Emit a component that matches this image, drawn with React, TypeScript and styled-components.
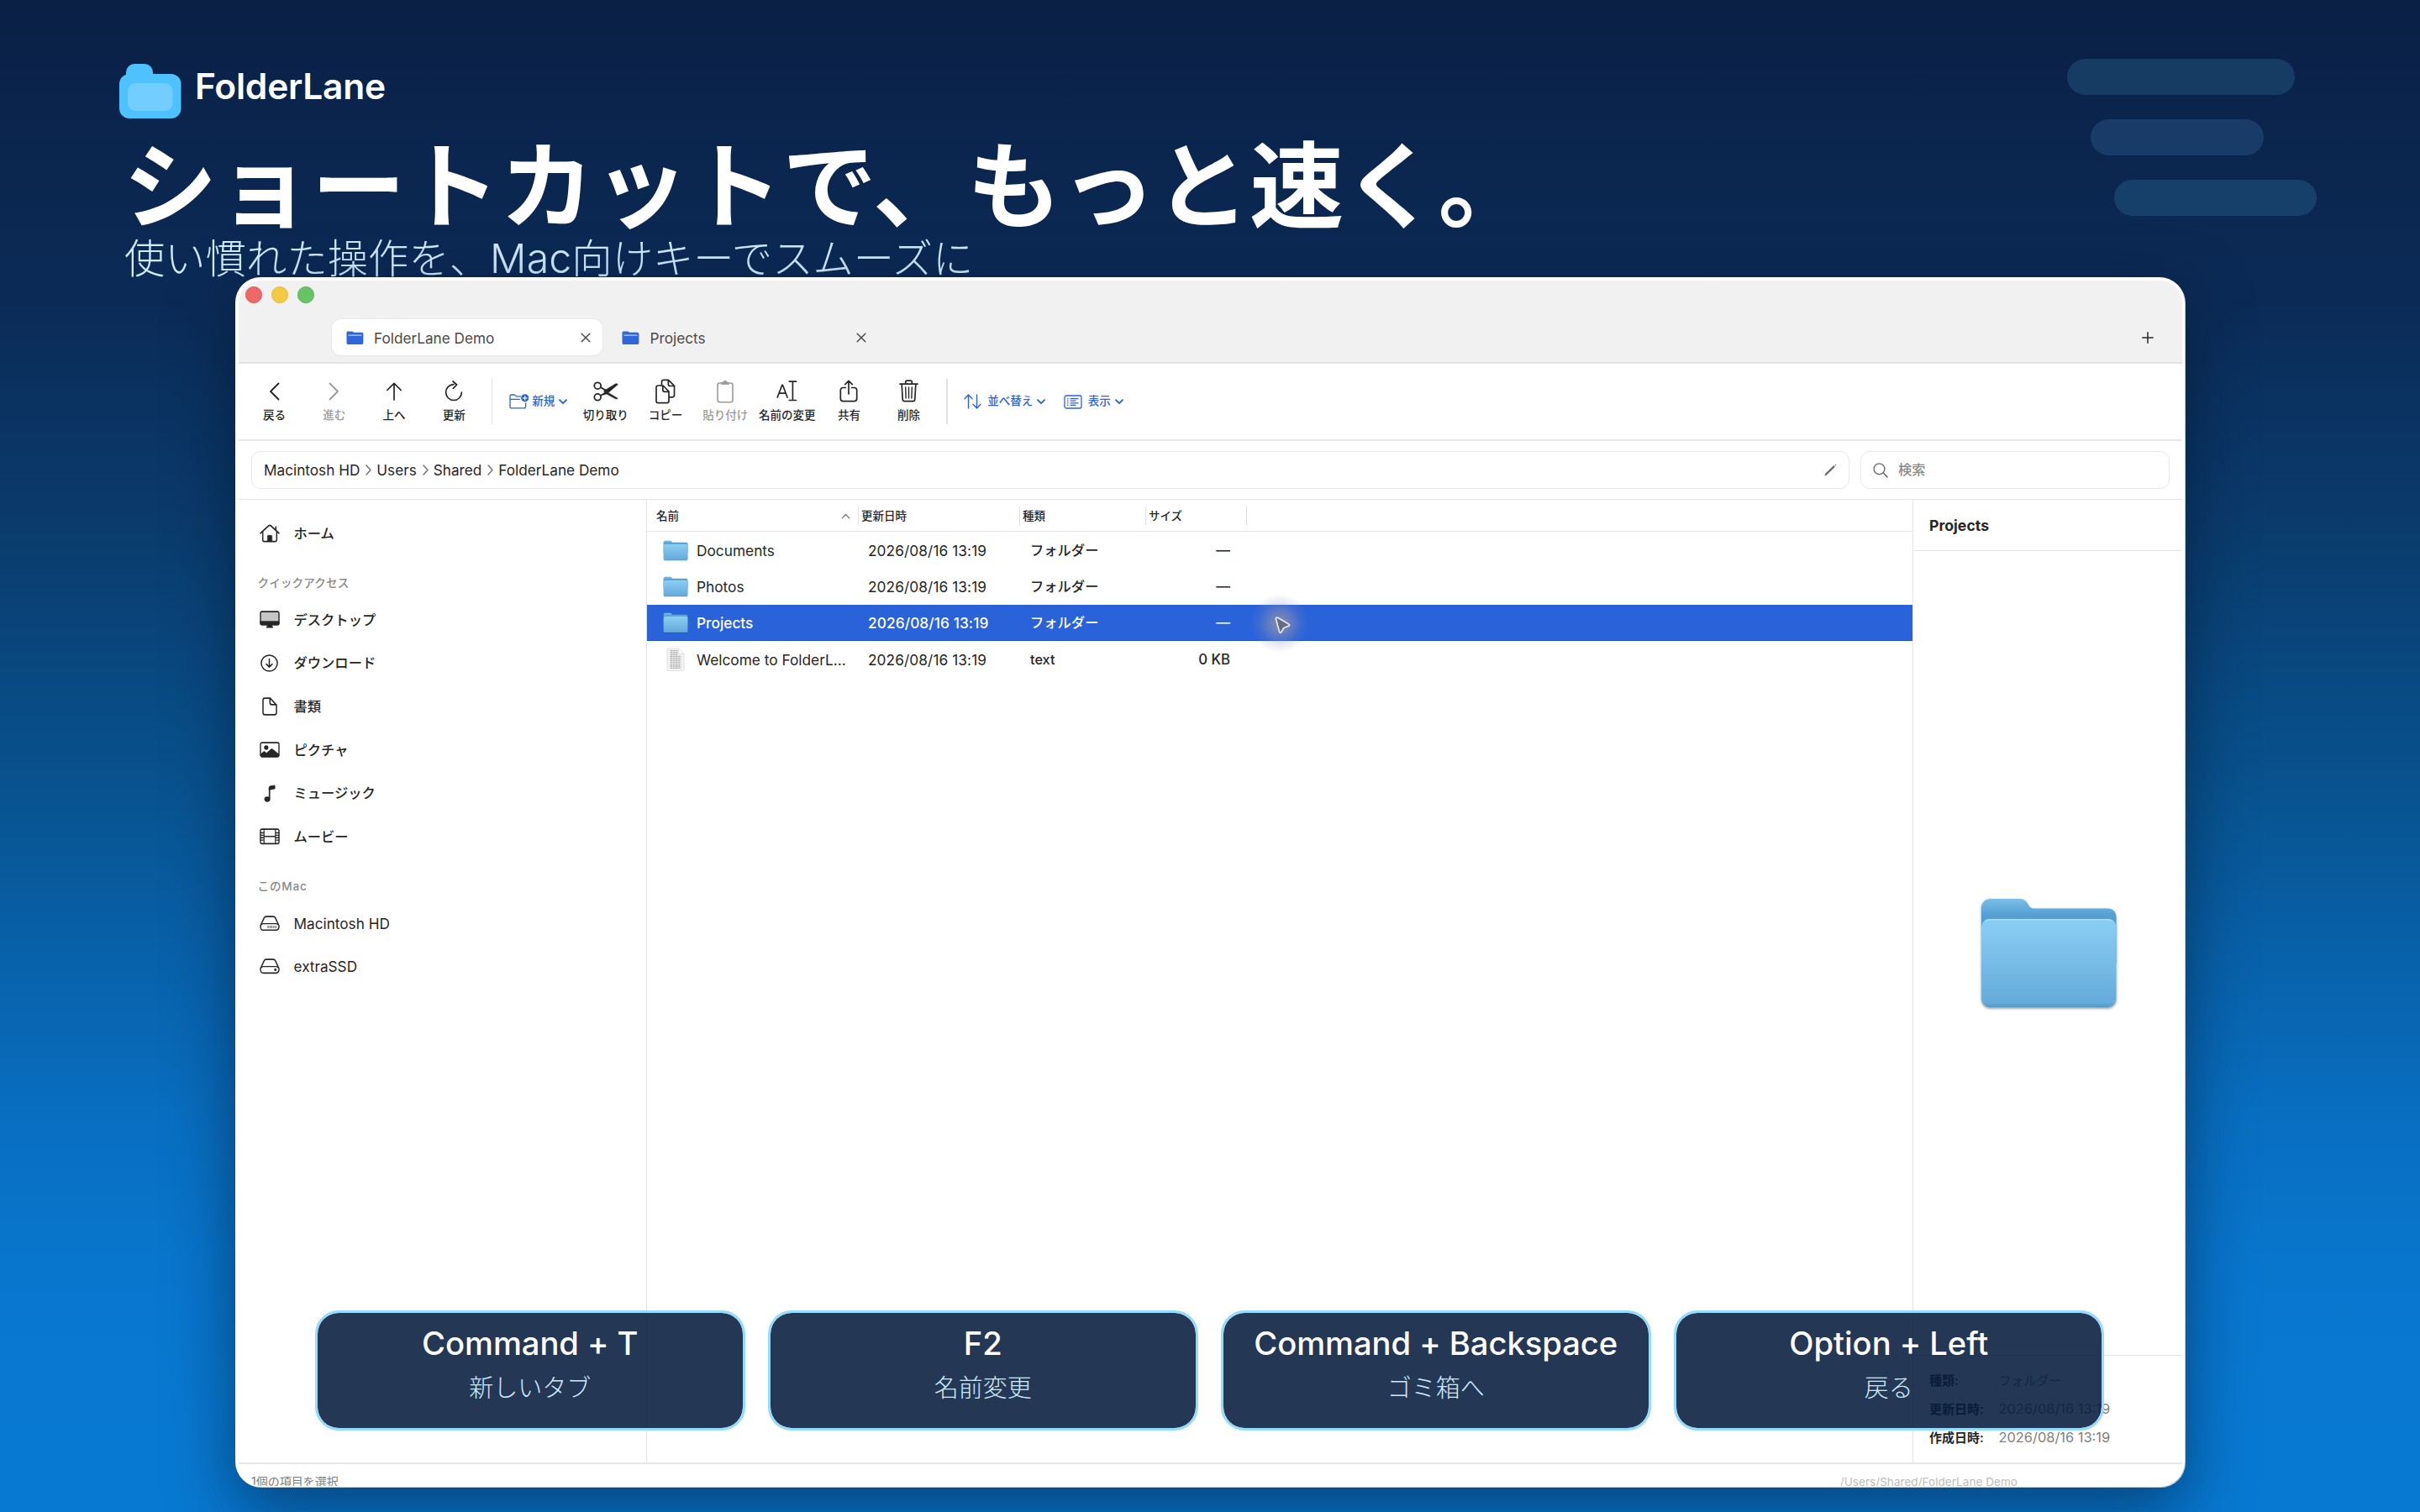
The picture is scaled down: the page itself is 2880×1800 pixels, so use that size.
import React from "react";
import styled, { createGlobalStyle, css } from "styled-components";

const INK = "#262626";
const BLUE = "#2a62d9";
const LINE = "#e4e4e4";

const GlobalStyle = createGlobalStyle`
  *, *::before, *::after { box-sizing: border-box; }
  html, body { margin: 0; padding: 0; background: #0a2045; }
  body { font-family: Inter, "Noto Sans CJK JP", sans-serif; color: ${INK}; line-height: 1; }
  h1, p { margin: 0; font-weight: inherit; }
  svg { display: block; flex: none; }
`;

const Stage = styled.div`
  position: relative;
  width: 2880px;
  height: 1800px;
  overflow: hidden;
  background: linear-gradient(
    180deg,
    #0a2045 0,
    #0b2b57 360px,
    #0a3c6e 640px,
    #08528e 930px,
    #0862ab 1150px,
    #086fc2 1340px,
    #0876cd 1500px,
    #0879d2 1700px
  );
`;

const Header = styled.header`
  height: 330px;
  padding: 76px 0 0 142px;
  display: flex;
  flex-direction: column;
  align-items: flex-start;
`;

const Brand = styled.div`
  display: flex;
  gap: 16px;
  height: 66px;
`;

const BrandName = styled.div`
  margin-top: 6px;
  font-size: 42.5px;
  line-height: 42px;
  font-weight: 600;
  letter-spacing: -0.25px;
  color: #fff;
  white-space: nowrap;
`;

const Headline = styled.h1`
  margin-left: 4.5px;
  margin-top: 24px;
  height: 112px;
  line-height: 112px;
  font-size: 112px;
  font-weight: 700;
  letter-spacing: 0.1px;
  color: #fff;
  white-space: nowrap;
`;

const Tagline = styled.p`
  margin-left: 6px;
  margin-top: 6px;
  line-height: 48px;
  font-size: 48.3px;
  font-weight: 300;
  letter-spacing: 0.05px;
  color: #cfebff;
  white-space: nowrap;
`;

const Lanes = styled.div`
  position: absolute;
  left: 2460px;
  top: 70px;
  display: flex;
  flex-direction: column;
  gap: 29px;
`;

const LaneBar = styled.div<{ $indent: number; $width: number; $color: string }>`
  height: 43px;
  border-radius: 22px;
  margin-left: ${(p) => p.$indent}px;
  width: ${(p) => p.$width}px;
  background: ${(p) => p.$color};
`;

const Window = styled.main`
  position: relative;
  margin-left: 280px;
  width: 2320px;
  height: 1440px;
  padding: 4px 3px 1px 4px;
  border-radius: 30px;
  background: #fff;
  box-shadow: 1px 1px 0 #bccbd8, 0 28px 78px rgba(3, 14, 34, 0.5);
`;

const WindowBody = styled.div`
  display: flex;
  flex-direction: column;
  height: 100%;
  overflow: hidden;
  border-radius: 27px;
`;

const Chrome = styled.div`
  height: 99px;
  flex: none;
  background: #f1f1f1;
  border-bottom: 2px solid #e3e3e3;
`;

const Lights = styled.div`
  display: flex;
  gap: 11.5px;
  padding: 7px 0 0 8px;
  height: 46px;
`;

const Light = styled.span<{ $fill: string; $edge: string }>`
  width: 19.5px;
  height: 19.5px;
  border-radius: 50%;
  background: ${(p) => p.$fill};
  border: 1px solid ${(p) => p.$edge};
`;

const TabStrip = styled.div`
  display: flex;
  align-items: center;
  padding: 0 34.5px 0 110.5px;
`;

const Tab = styled.div<{ $active?: boolean }>`
  display: flex;
  align-items: center;
  width: 322px;
  height: 43px;
  margin-right: 6.5px;
  padding: 1px 14px 0 17px;
  border-radius: 11px;
  font-size: 17.2px;
  font-weight: 420;
  color: #4a4a4a;
  ${(p) =>
    p.$active &&
    css`
      background: #fff;
      box-shadow: 0 0 0 1px #e8e8e8, 0 1px 2px rgba(0, 0, 0, 0.06);
    `}
`;

const TabLabel = styled.span`
  flex: 1;
  margin-left: 12.5px;
  padding-top: 1px;
  white-space: nowrap;
`;

const Spacer = styled.div`
  flex: 1;
`;

const Toolbar = styled.div`
  display: flex;
  align-items: center;
  flex: none;
  height: 92px;
  padding-left: 7px;
  border-bottom: 2px solid #e8e8e8;
`;

const ToolItem = styled.div<{ $width?: number; $dim?: boolean }>`
  width: ${(p) => p.$width ?? 71.2}px;
  display: flex;
  flex-direction: column;
  align-items: center;
  gap: 6px;
  padding-bottom: 3px;
  color: ${(p) => (p.$dim ? "#9a9a9a" : INK)};
`;

const ToolIcon = styled.div`
  height: 28px;
  display: flex;
  align-items: center;
`;

const ToolLabel = styled.span`
  font-size: 13.5px;
  line-height: 16px;
  font-weight: 500;
  white-space: nowrap;
`;

const Divider = styled.div<{ $before: number; $after: number }>`
  width: 1.5px;
  height: 54px;
  margin: 0 ${(p) => p.$after}px 0 ${(p) => p.$before}px;
  background: #e2e2e2;
`;

const MenuItem = styled.div<{ $after?: number; $gap?: number }>`
  display: flex;
  align-items: center;
  margin-right: ${(p) => p.$after ?? 0}px;
  color: ${BLUE};
  font-size: 13.5px;
  font-weight: 500;
  white-space: nowrap;

  span {
    margin: 0 5px 0 ${(p) => p.$gap ?? 7}px;
  }
`;

const AddressRow = styled.div`
  display: flex;
  flex: none;
  gap: 13px;
  height: 70px;
  padding: 12px 15px 0 15px;
  border-bottom: 1.5px solid ${LINE};
`;

const Field = styled.div<{ $width?: number }>`
  display: flex;
  align-items: center;
  height: 45px;
  border: 1.5px solid #e8e8e8;
  border-radius: 11px;
  padding: 0 14px;
  color: #6e6e6e;
  ${(p) => (p.$width ? `width: ${p.$width}px;` : "flex: 1;")}
`;

const Crumb = styled.span`
  font-size: 17.2px;
  font-weight: 420;
  color: ${INK};
  white-space: nowrap;
`;

const CrumbMark = styled.span`
  width: 20px;
  display: flex;
  justify-content: center;
  padding-left: 1px;
`;

const Placeholder = styled.span`
  margin-left: 12px;
  font-size: 16.3px;
  font-weight: 500;
  color: #8a8a8a;
`;

const Columns = styled.div`
  display: flex;
  flex: 1;
  min-height: 0;
`;

const Sidebar = styled.nav`
  width: 486px;
  padding-top: 14px;
  border-right: 1.5px solid ${LINE};
`;

const Place = styled.div<{ $latin?: boolean }>`
  display: flex;
  align-items: center;
  gap: 17px;
  height: 51.6px;
  padding-left: 24.5px;
  font-size: ${(p) => (p.$latin ? 17.2 : 16.3)}px;
  font-weight: ${(p) => (p.$latin ? 430 : 500)};
  white-space: nowrap;
`;

const SectionLabel = styled.div<{ $spacing?: number }>`
  height: 51.6px;
  padding: 25.5px 0 0 22.5px;
  font-size: 13.6px;
  line-height: 16px;
  font-weight: 500;
  letter-spacing: ${(p) => p.$spacing ?? 0.1}px;
  color: #8a8a8a;
`;

const FileList = styled.section`
  position: relative;
  width: 1506px;
`;

const listGrid = css`
  display: grid;
  grid-template-columns: 252px 192px 150px 120px;
  align-items: center;
`;

const ListHeader = styled.div`
  ${listGrid}
  height: 38px;
  border-bottom: 1.5px solid ${LINE};
  font-size: 13.5px;
  font-weight: 500;
`;

const HeadCell = styled.div<{ $first?: boolean }>`
  display: flex;
  align-items: center;
  justify-content: space-between;
  height: 22px;
  padding: 2px 9.5px 0 ${(p) => (p.$first ? 11 : 3)}px;
  border-right: 1.5px solid #e0e0e0;

  svg {
    color: #6a6a6a;
  }
`;

const FileRow = styled.div<{ $selected?: boolean }>`
  ${listGrid}
  height: 43.4px;
  padding-top: 1px;
  font-size: 17.3px;
  font-weight: 420;
  white-space: nowrap;
  ${(p) =>
    p.$selected &&
    css`
      background: ${BLUE};
      border-bottom: 1px solid #1c50cc;
      color: #fff;
      font-weight: 450;
    `}
`;

const NameCell = styled.div`
  display: flex;
  align-items: center;
  padding-left: 19.5px;
  gap: 11.5px;
`;

const IconSlot = styled.div`
  width: 28px;
  display: flex;
  justify-content: center;
`;

const TextCell = styled.div`
  padding-left: 11px;
  letter-spacing: 0.08px;
`;

const KindCell = styled.div`
  padding-left: 12px;
  font-size: 16.3px;
  font-weight: 450;
`;

const SizeCell = styled.div`
  padding-right: 20px;
  text-align: right;
  font-size: 16.8px;
  font-weight: 450;
`;

const Pointer = styled.div`
  position: absolute;
  left: 718px;
  top: 112px;
  width: 70px;
  height: 70px;
  display: flex;
  align-items: center;
  justify-content: center;
  padding: 6px 0 0 5px;
  background: radial-gradient(
    circle closest-side,
    rgba(150, 150, 165, 0.85) 0,
    rgba(140, 145, 175, 0.6) 35%,
    rgba(130, 140, 190, 0.2) 70%,
    rgba(130, 140, 190, 0) 100%
  );
`;

const Preview = styled.aside`
  flex: 1;
  display: flex;
  flex-direction: column;
  border-left: 1.5px solid ${LINE};
`;

const PreviewTitle = styled.div`
  height: 61px;
  padding: 0 0 0 19px;
  line-height: 61px;
  border-bottom: 1.5px solid ${LINE};
  font-size: 17.7px;
  font-weight: 700;
`;

const PreviewArt = styled.div`
  flex: 1;
  display: flex;
  align-items: center;
  justify-content: center;
  padding-left: 2px;
`;

const Facts = styled.dl`
  margin: 0;
  height: 128px;
  padding: 12px 0 0 19px;
  border-top: 1.5px solid ${LINE};
`;

const Fact = styled.div`
  display: flex;
  align-items: center;
  height: 34px;
  font-size: 15px;

  dt {
    width: 82.5px;
    font-weight: 600;
  }

  dd {
    margin: 0;
    color: #808080;
  }
`;

const Stamp = styled.span`
  font-size: 16.4px;
`;

const StatusBar = styled.footer`
  display: flex;
  flex: none;
  justify-content: space-between;
  height: 28px;
  padding: 12.5px 196px 0 15px;
  border-top: 2px solid #e6e6e6;
  font-size: 14px;
  line-height: 16px;
  color: #7d7d7d;
  white-space: nowrap;
`;

const StatusPath = styled.span`
  font-size: 13.6px;
  color: #bcbcbc;
`;

const Shortcuts = styled.div`
  position: absolute;
  left: 95px;
  top: 1230px;
  display: flex;
  gap: 27.5px;
`;

const Shortcut = styled.div`
  display: flex;
  flex-direction: column;
  align-items: center;
  width: 511.5px;
  height: 143px;
  padding-top: 16px;
  border: 3px solid #93dcfd;
  border-radius: 28px;
  background: rgba(6, 27, 60, 0.88);
  background-clip: padding-box;
`;

const Keys = styled.div`
  font-size: 38.2px;
  line-height: 40px;
  font-weight: 550;
  letter-spacing: -0.05px;
  color: #fff;
  white-space: nowrap;
`;

const KeyAction = styled.div`
  margin-top: 19px;
  font-size: 29px;
  line-height: 30px;
  font-weight: 300;
  color: #cdebff;
`;

type IconProps = { w: number; h: number; vh?: number; sw?: number; children: React.ReactNode };

const Icon = ({ w, h, vh, sw = 1.7, children }: IconProps) => (
  <svg
    width={w}
    height={h}
    viewBox={`0 0 ${w} ${vh ?? h}`}
    preserveAspectRatio="none"
    fill="none"
    stroke="currentColor"
    strokeWidth={sw}
    strokeLinecap="round"
    strokeLinejoin="round"
  >
    {children}
  </svg>
);

const Logo = () => (
  <svg width="74" height="66" viewBox="0 0 74 66">
    <rect x="8" y="0" width="32" height="34" rx="10" fill="#4dc2ff" />
    <rect x="0" y="12" width="73.5" height="53" rx="12" fill="#4dc2ff" />
    <rect x="10" y="23" width="53.5" height="33" rx="9" fill="#73ceff" />
  </svg>
);

const TabFolder = () => (
  <svg width="21" height="17" viewBox="0 0 21 17">
    <path
      d="M2.2 0.5h4.6c.6 0 1 .2 1.5.6l.8.6h9.3c1.3 0 2 .7 2 2v10.2c0 1.3-.8 2.1-2.1 2.1H2.6C1.3 16 .5 15.2.5 13.9V2.3C.5 1.1 1.1.5 2.2.5z"
      fill="#2f66d8"
    />
    <path d="M2.6 5.1h15.8" stroke="#dfe9ff" strokeWidth="1" />
  </svg>
);

const CloseIcon = () => (
  <Icon w={12} h={12} sw={1.5}>
    <path d="M1.2 1.2l9.6 9.6M10.8 1.2L1.2 10.8" />
  </Icon>
);

const ChevronDown = () => (
  <Icon w={10} h={7} sw={1.9}>
    <path d="M1 1.2l4 4 4-4" />
  </Icon>
);

const CrumbChevron = () => (
  <Icon w={7} h={13} sw={1.4}>
    <path d="M1 1l5 5.5-5 5.5" />
  </Icon>
);

const FolderArt = ({ w, h, id }: { w: number; h: number; id: string }) => (
  <svg width={w} height={h} viewBox="0 0 168 138" preserveAspectRatio="none">
    <defs>
      <linearGradient id={`${id}-back`} x1="0" y1="0" x2="0" y2="1">
        <stop offset="0" stopColor="#7bbfe9" />
        <stop offset="0.25" stopColor="#559fd3" />
        <stop offset="1" stopColor="#4b94ca" />
      </linearGradient>
      <linearGradient id={`${id}-front`} x1="0" y1="0" x2="0" y2="1">
        <stop offset="0" stopColor="#8bcef4" />
        <stop offset="0.95" stopColor="#65abdb" />
        <stop offset="1" stopColor="#5397c6" />
      </linearGradient>
      <filter id={`${id}-shadow`} x="-10%" y="-10%" width="120%" height="125%">
        <feDropShadow dx="0" dy="1.5" stdDeviation="1.5" floodColor="#000" floodOpacity="0.45" />
      </filter>
    </defs>
    <g filter={`url(#${id}-shadow)`}>
      <path
        d="M4 15c0-6.5 4.5-11 11-11h34.5c4 0 7 1.7 9.2 5l1.8 2.9c1.7 2.7 3.5 3.6 7 3.6H154c6.5 0 10.5 4 10.5 10.5V80H4z"
        fill={`url(#${id}-back)`}
      />
      <path
        d="M4 38c0-6 4.5-10 10.5-10H154c6 0 10.5 4 10.5 10v84.5c0 6-4.5 10.5-10.5 10.5H14.5C8.5 133 4 128.5 4 122.5z"
        fill={`url(#${id}-front)`}
      />
      <path d="M8 30.5c2-1.3 4-1.7 6.5-1.7H154c2.5 0 4.5.4 6.5 1.7" fill="none" stroke="#a6defc" strokeWidth="1.4" />
    </g>
  </svg>
);

const TextFileArt = () => (
  <svg width="24" height="29" viewBox="0 0 24 29">
    <path d="M3 1h12.5L22 7.5V26c0 1-.6 1.6-1.6 1.6H3.6C2.6 27.6 2 27 2 26V2c0-.6.4-1 1-1z" fill="#f3f3f3" stroke="#dcdcdc" strokeWidth="0.9" />
    <path d="M15.5 1v5c0 1 .5 1.5 1.5 1.5h5z" fill="#fff" stroke="#dcdcdc" strokeWidth="0.7" />
    <g stroke="#b0b0b0" strokeWidth="1.3" strokeDasharray="3 .6 2 .5">
      <path d="M5.5 3.6h9M5.5 5.9h9M5.5 8.2h9M5.5 10.5h13M5.5 12.8h13M5.5 15.1h13M5.5 17.4h13M5.5 19.7h13M5.5 22h13M5.5 24.3h13" />
    </g>
  </svg>
);

const NewFolderIcon = () => (
  <Icon w={23.5} h={18} sw={1.3}>
    <path d="M13.5 2.9H8.5L7 1.4c-.3-.3-.6-.4-1-.4H2.6C1.6 1 1 1.6 1 2.6v12.3c0 1.2.8 2 2 2h14.6c1.2 0 2-.8 2-2V11M1 6.3h11.5" />
    <circle cx="18.7" cy="4.8" r="4.6" fill="currentColor" stroke="none" />
    <path d="M18.7 2.5v4.6M16.4 4.8H21" stroke="#fff" strokeWidth="1.2" />
  </Icon>
);

const SortIcon = () => (
  <Icon w={21} h={18} sw={1.4}>
    <path d="M5.5 17V1.2M1 5.7l4.5-4.6L10 5.7M15.5 1v15.8M11 12.3l4.5 4.6 4.5-4.6" />
  </Icon>
);

const ViewIcon = () => (
  <Icon w={22} h={17} sw={1.3}>
    <rect x="1" y="1" width="20" height="15" rx="2" />
    <path d="M8 4.7h9M8 7.2h6M8 9.8h9M8 12.3h6" strokeWidth="1.2" />
    <path d="M4.7 4.7h.3M4.7 7.2h.3M4.7 9.8h.3M4.7 12.3h.3" strokeWidth="1.4" />
  </Icon>
);

const navTools = [
  {
    label: "戻る",
    icon: (
      <Icon w={13} h={22} sw={1.9}>
        <path d="M11.5 1.5L2 11l9.5 9.5" />
      </Icon>
    ),
  },
  {
    label: "進む",
    dim: true,
    icon: (
      <Icon w={13} h={22} sw={1.8}>
        <path d="M1.5 1.5L11 11l-9.5 9.5" />
      </Icon>
    ),
  },
  {
    label: "上へ",
    icon: (
      <Icon w={20} h={22}>
        <path d="M10 21V1.3M1.8 9.5L10 1.3l8.2 8.2" />
      </Icon>
    ),
  },
  {
    label: "更新",
    icon: (
      <Icon w={22} h={26}>
        <path d="M11 4.7a9.4 9.4 0 1 0 9.4 9.4M10 1l4.6 4-4.3 4.4" />
      </Icon>
    ),
  },
];

const editTools = [
  {
    label: "切り取り",
    icon: (
      <Icon w={30} h={24} sw={1.8}>
        <circle cx="5.2" cy="5.2" r="3.9" />
        <circle cx="5.2" cy="18.8" r="3.9" />
        <path d="M8.7 7l6 3.6M8.7 17l6-3.6" />
        <path d="M12.5 11.2L26 3.3c1.3-.7 2.6-.6 3.3.4L16.5 14.8l-4.5 1.4 1.5-4zM17.5 13.2l11.8 7c-.8 1-2.2 1-3.4.4L15.5 14.8z" fill="currentColor" strokeWidth="0.5" />
      </Icon>
    ),
  },
  {
    label: "コピー",
    icon: (
      <Icon w={26} h={30}>
        <path d="M8.5 7.5V3.5c0-1.3.9-2.2 2.2-2.2h5.8l7 7v11.3c0 1.3-.9 2.2-2.2 2.2h-3.5M16.3 1.5v4.7c0 1.5.8 2.3 2.3 2.3h4.7" />
        <path d="M2 10.2C2 8.8 2.9 8 4.2 8H10l7 7v11.5c0 1.3-.9 2.2-2.2 2.2H4.2c-1.3 0-2.2-.9-2.2-2.2zM9.8 8.2V13c0 1.5.8 2.3 2.3 2.3h4.7" />
      </Icon>
    ),
  },
  {
    label: "貼り付け",
    dim: true,
    icon: (
      <Icon w={20} h={28} sw={1.6}>
        <path d="M5.5 4H3.5C2 4 1 5 1 6.5v17.7c0 1.5 1 2.5 2.5 2.5h13c1.5 0 2.5-1 2.5-2.5V6.5C19 5 18 4 16.5 4h-2" />
        <path d="M6.5 3.3h1.2c.2-1.2 1.1-2 2.3-2s2.1.8 2.3 2h1.2c.6 0 1 .4 1 1v1.2H5.5V4.3c0-.6.4-1 1-1z" fill="currentColor" strokeWidth="0.8" />
      </Icon>
    ),
  },
  {
    label: "名前の変更",
    width: 76,
    icon: (
      <Icon w={25} h={25} sw={1.7}>
        <path d="M1.2 20L6.8 5.3h.6L13 20M3.2 15.2H11" />
        <path d="M15.3 1.2h8.2M15.3 23.5h8.2M19.4 1.2v22.3" />
      </Icon>
    ),
  },
  {
    label: "共有",
    icon: (
      <Icon w={22} h={27}>
        <path d="M7.3 9.5H4.5C2.5 9.5 1.3 10.7 1.3 12.6v9.8c0 2 1.2 3.2 3.2 3.2h13c2 0 3.2-1.2 3.2-3.2v-9.8c0-1.9-1.2-3.1-3.2-3.1h-2.8M11 17V1.5M6.7 5.7L11 1.4l4.3 4.3" />
      </Icon>
    ),
  },
  {
    label: "削除",
    icon: (
      <Icon w={23} h={27}>
        <path d="M1 5.2h21M7.7 5V3c0-1.2.7-1.9 1.9-1.9h3.8c1.2 0 1.9.7 1.9 1.9v2M3.2 5.5l1 18c.1 1.4 1 2.2 2.4 2.2h9.8c1.4 0 2.3-.8 2.4-2.2l1-18" />
        <path d="M7.7 9l.4 13M11.5 9v13M15.3 9l-.4 13" strokeWidth="1.4" />
      </Icon>
    ),
  },
];

const HomeIcon = () => (
  <Icon w={24} h={22} vh={19} sw={1.5}>
    <path d="M1 9.3L10.9 1.5c.7-.5 1.5-.5 2.2 0L23 9.3M3.7 8v8.5c0 .9.5 1.4 1.4 1.4h13.8c.9 0 1.4-.5 1.4-1.4V8M19.3 6V2.8" />
    <path d="M9.3 17.5v-5.2c0-.6.3-.9.9-.9h3.6c.6 0 .9.3.9.9v5.2z" fill="currentColor" strokeWidth="0.5" />
  </Icon>
);

const DesktopIcon = () => (
  <Icon w={24} h={21} vh={18} sw={1.4}>
    <rect x="1" y="1" width="22" height="13.3" rx="1.5" fill="#c6c6c6" />
    <path d="M1 11h22v2.3c0 .7-.4 1.2-1.2 1.2H2.2c-.8 0-1.2-.5-1.2-1.2zM9.5 14.5h5v2h-5z" fill="currentColor" strokeWidth="0.8" />
    <path d="M8.5 16.8h7" />
  </Icon>
);

const DownloadIcon = () => (
  <Icon w={21} h={21} sw={1.5}>
    <circle cx="10.5" cy="10.5" r="9.6" />
    <path d="M10.5 5.5v9.5M7 11.6l3.5 3.5 3.5-3.5" />
  </Icon>
);

const DocIcon = () => (
  <Icon w={18} h={22} vh={19} sw={1.5}>
    <path d="M1 3.2C1 1.8 1.9 1 3.2 1H9.5l7.5 7v7.8c0 1.4-.9 2.2-2.2 2.2H3.2C1.9 18 1 17.2 1 15.8zM9.3 1.2v4.5c0 1.4.7 2 2.2 2H17" />
  </Icon>
);

const PictureIcon = () => (
  <Icon w={24} h={19} vh={17} sw={1.4}>
    <rect x="1" y="1" width="22" height="15" rx="1.8" />
    <ellipse cx="7.8" cy="6.3" rx="1.9" ry="1.7" fill="currentColor" />
    <path d="M1.2 13.2l3.6-2.6c.5-.3 1-.3 1.5.1l1.9 1.4 5.3-4.2c.6-.5 1.2-.5 1.8 0l7.5 5.2V15c0 .6-.4 1-1 1H2.2c-.6 0-1-.4-1-1z" fill="currentColor" strokeWidth="0.5" />
  </Icon>
);

const MusicIcon = () => (
  <Icon w={14} h={21} vh={18} sw={1.2}>
    <path d="M6.7 3.2v11.3" strokeWidth="1.7" />
    <path d="M6.3 3.2c0-1 .4-1.5 1.3-1.7L12.5.8c.4-.1.7.2.7.6v2.8L6.5 5.5z" fill="currentColor" strokeWidth="0.6" />
    <ellipse cx="4" cy="15" rx="2.9" ry="2.1" fill="currentColor" />
  </Icon>
);

const MovieIcon = () => (
  <Icon w={24} h={19.5} vh={17} sw={1.4}>
    <rect x="1" y="1" width="22" height="15" rx="1.5" />
    <path d="M5.2 1v15M18.8 1v15M5.2 8.5h13.6M1 4.8h4M1 7.3h4M1 9.8h4M1 12.3h4M19 4.8h4M19 7.3h4M19 9.8h4M19 12.3h4" strokeWidth="1.2" />
  </Icon>
);

const DiskIcon = ({ external }: { external?: boolean }) => (
  <Icon w={24} h={18.5} vh={16} sw={1.4}>
    <path d="M1 11.3c0-.7.1-1.2.4-1.7l3.8-7C5.8 1.5 6.6 1 7.8 1h8.4c1.2 0 2 .5 2.6 1.6l3.8 7c.3.5.4 1 .4 1.7 0 2.4-1.2 3.7-3.5 3.7h-15C2.2 15 1 13.7 1 11.3z" />
    <path d="M1.3 9.9c.7-1.1 1.7-1.6 3.2-1.6h15c1.5 0 2.5.5 3.2 1.6" strokeWidth="1.2" />
    {external ? (
      <circle cx="18.7" cy="11.6" r="0.7" fill="currentColor" />
    ) : (
      <path d="M10 10.8v1.6M12.3 10.8v1.6M14.6 10.8v1.6M16.9 10.8v1.6M19.2 10.8v1.6" strokeWidth="1" />
    )}
  </Icon>
);

const quickAccess = [
  { label: "デスクトップ", icon: <DesktopIcon /> },
  { label: "ダウンロード", icon: <DownloadIcon /> },
  { label: "書類", icon: <DocIcon /> },
  { label: "ピクチャ", icon: <PictureIcon /> },
  { label: "ミュージック", icon: <MusicIcon /> },
  { label: "ムービー", icon: <MovieIcon /> },
];

const crumbs = ["Macintosh HD", "Users", "Shared", "FolderLane Demo"];

const stamp = "2026/08/16 13:19";

const files = [
  { name: "Documents", kind: "フォルダー", size: "—" },
  { name: "Photos", kind: "フォルダー", size: "—" },
  { name: "Projects", kind: "フォルダー", size: "—", selected: true },
  { name: "Welcome to FolderL...", kind: "text", size: "0 KB", file: true },
];

const shortcuts = [
  { keys: "Command + T", action: "新しいタブ" },
  { keys: "F2", action: "名前変更" },
  { keys: "Command + Backspace", action: "ゴミ箱へ" },
  { keys: "Option + Left", action: "戻る" },
];

const PlaceIcon = styled.span`
  width: 24px;
  display: flex;
  justify-content: center;
`;

export default function App() {
  return (
    <Stage lang="ja">
      <GlobalStyle />
      <Header>
        <Brand>
          <Logo />
          <BrandName>FolderLane</BrandName>
        </Brand>
        <Headline>ショートカットで、もっと速く。</Headline>
        <Tagline>使い慣れた操作を、Mac向けキーでスムーズに</Tagline>
      </Header>
      <Lanes>
        <LaneBar $indent={0} $width={271} $color="#173c64" />
        <LaneBar $indent={28} $width={206} $color="#183c67" />
        <LaneBar $indent={56} $width={241} $color="#16406a" />
      </Lanes>

      <Window>
        <WindowBody>
          <Chrome>
            <Lights>
              <Light $fill="#ee6868" $edge="#e25555" />
              <Light $fill="#f4c944" $edge="#e9bb35" />
              <Light $fill="#66c466" $edge="#53b553" />
            </Lights>
            <TabStrip>
              <Tab $active>
                <TabFolder />
                <TabLabel>FolderLane Demo</TabLabel>
                <CloseIcon />
              </Tab>
              <Tab>
                <TabFolder />
                <TabLabel>Projects</TabLabel>
                <CloseIcon />
              </Tab>
              <Spacer />
              <Icon w={14} h={14} sw={1.5}>
                <path d="M7 .8v12.4M.8 7h12.4" />
              </Icon>
            </TabStrip>
          </Chrome>

          <Toolbar>
            {navTools.map((t) => (
              <ToolItem key={t.label} $dim={t.dim}>
                <ToolIcon>{t.icon}</ToolIcon>
                <ToolLabel>{t.label}</ToolLabel>
              </ToolItem>
            ))}
            <Divider $before={9} $after={19.5} />
            <MenuItem $after={10} $gap={4}>
              <NewFolderIcon />
              <span>新規</span>
              <ChevronDown />
            </MenuItem>
            {editTools.map((t) => (
              <ToolItem key={t.label} $dim={t.dim} $width={t.width}>
                <ToolIcon>{t.icon}</ToolIcon>
                <ToolLabel>{t.label}</ToolLabel>
              </ToolItem>
            ))}
            <Divider $before={9} $after={19.5} />
            <MenuItem $after={21.5}>
              <SortIcon />
              <span>並べ替え</span>
              <ChevronDown />
            </MenuItem>
            <MenuItem>
              <ViewIcon />
              <span>表示</span>
              <ChevronDown />
            </MenuItem>
          </Toolbar>

          <AddressRow>
            <Field>
              {crumbs.map((c, i) => (
                <React.Fragment key={c}>
                  {i > 0 && (
                    <CrumbMark>
                      <CrumbChevron />
                    </CrumbMark>
                  )}
                  <Crumb>{c}</Crumb>
                </React.Fragment>
              ))}
              <Spacer />
              <Icon w={15} h={15} sw={1.3}>
                <path d="M1.2 13.8l1-2.2 9.3-8.8M2.2 13.2l9.8-9.4M13.3 1.7l.3-.3" />
              </Icon>
            </Field>
            <Field $width={368}>
              <Icon w={18} h={18} sw={1.4}>
                <circle cx="7.5" cy="7.3" r="6.4" />
                <path d="M12.3 12l4.7 4.8" strokeWidth="1.7" />
              </Icon>
              <Placeholder>検索</Placeholder>
            </Field>
          </AddressRow>

          <Columns>
            <Sidebar>
              <Place>
                <PlaceIcon>
                  <HomeIcon />
                </PlaceIcon>
                ホーム
              </Place>
              <SectionLabel>クイックアクセス</SectionLabel>
              {quickAccess.map((q) => (
                <Place key={q.label}>
                  <PlaceIcon>{q.icon}</PlaceIcon>
                  {q.label}
                </Place>
              ))}
              <SectionLabel $spacing={0.8}>このMac</SectionLabel>
              <Place $latin>
                <PlaceIcon>
                  <DiskIcon />
                </PlaceIcon>
                Macintosh HD
              </Place>
              <Place $latin>
                <PlaceIcon>
                  <DiskIcon external />
                </PlaceIcon>
                extraSSD
              </Place>
            </Sidebar>

            <FileList>
              <ListHeader>
                <HeadCell $first>
                  名前
                  <Icon w={11} h={7} sw={1.2}>
                    <path d="M1.2 5.8l4.3-4.3 4.3 4.3" />
                  </Icon>
                </HeadCell>
                <HeadCell>更新日時</HeadCell>
                <HeadCell>種類</HeadCell>
                <HeadCell>サイズ</HeadCell>
              </ListHeader>
              {files.map((f) => (
                <FileRow key={f.name} $selected={f.selected}>
                  <NameCell>
                    <IconSlot>
                      {f.file ? <TextFileArt /> : <FolderArt w={30} h={25} id={f.name} />}
                    </IconSlot>
                    {f.name}
                  </NameCell>
                  <TextCell>{stamp}</TextCell>
                  <KindCell>{f.kind}</KindCell>
                  <SizeCell>{f.size}</SizeCell>
                </FileRow>
              ))}
              <Pointer>
                <svg width="24" height="26" viewBox="0 0 24 26">
                  <path
                    d="M4.5 4.6c-.2-1.3.9-2 2-1.3l13.2 7.6c1.3.8 1.2 2-.2 2.5l-4.6 1.6c-.6.2-1 .5-1.3 1l-2.7 4.5c-.8 1.2-2 1-2.3-.4z"
                    fill="#666c80"
                    stroke="#e6e7ef"
                    strokeWidth="1.7"
                  />
                </svg>
              </Pointer>
            </FileList>

            <Preview>
              <PreviewTitle>Projects</PreviewTitle>
              <PreviewArt>
                <FolderArt w={168} h={138} id="preview" />
              </PreviewArt>
              <Facts>
                <Fact>
                  <dt>種類:</dt>
                  <dd>フォルダー</dd>
                </Fact>
                <Fact>
                  <dt>更新日時:</dt>
                  <dd>
                    <Stamp>{stamp}</Stamp>
                  </dd>
                </Fact>
                <Fact>
                  <dt>作成日時:</dt>
                  <dd>
                    <Stamp>{stamp}</Stamp>
                  </dd>
                </Fact>
              </Facts>
            </Preview>
          </Columns>

          <StatusBar>
            <span>1個の項目を選択</span>
            <StatusPath>/Users/Shared/FolderLane Demo</StatusPath>
          </StatusBar>
        </WindowBody>

        <Shortcuts>
          {shortcuts.map((s) => (
            <Shortcut key={s.keys}>
              <Keys>{s.keys}</Keys>
              <KeyAction>{s.action}</KeyAction>
            </Shortcut>
          ))}
        </Shortcuts>
      </Window>
    </Stage>
  );
}
